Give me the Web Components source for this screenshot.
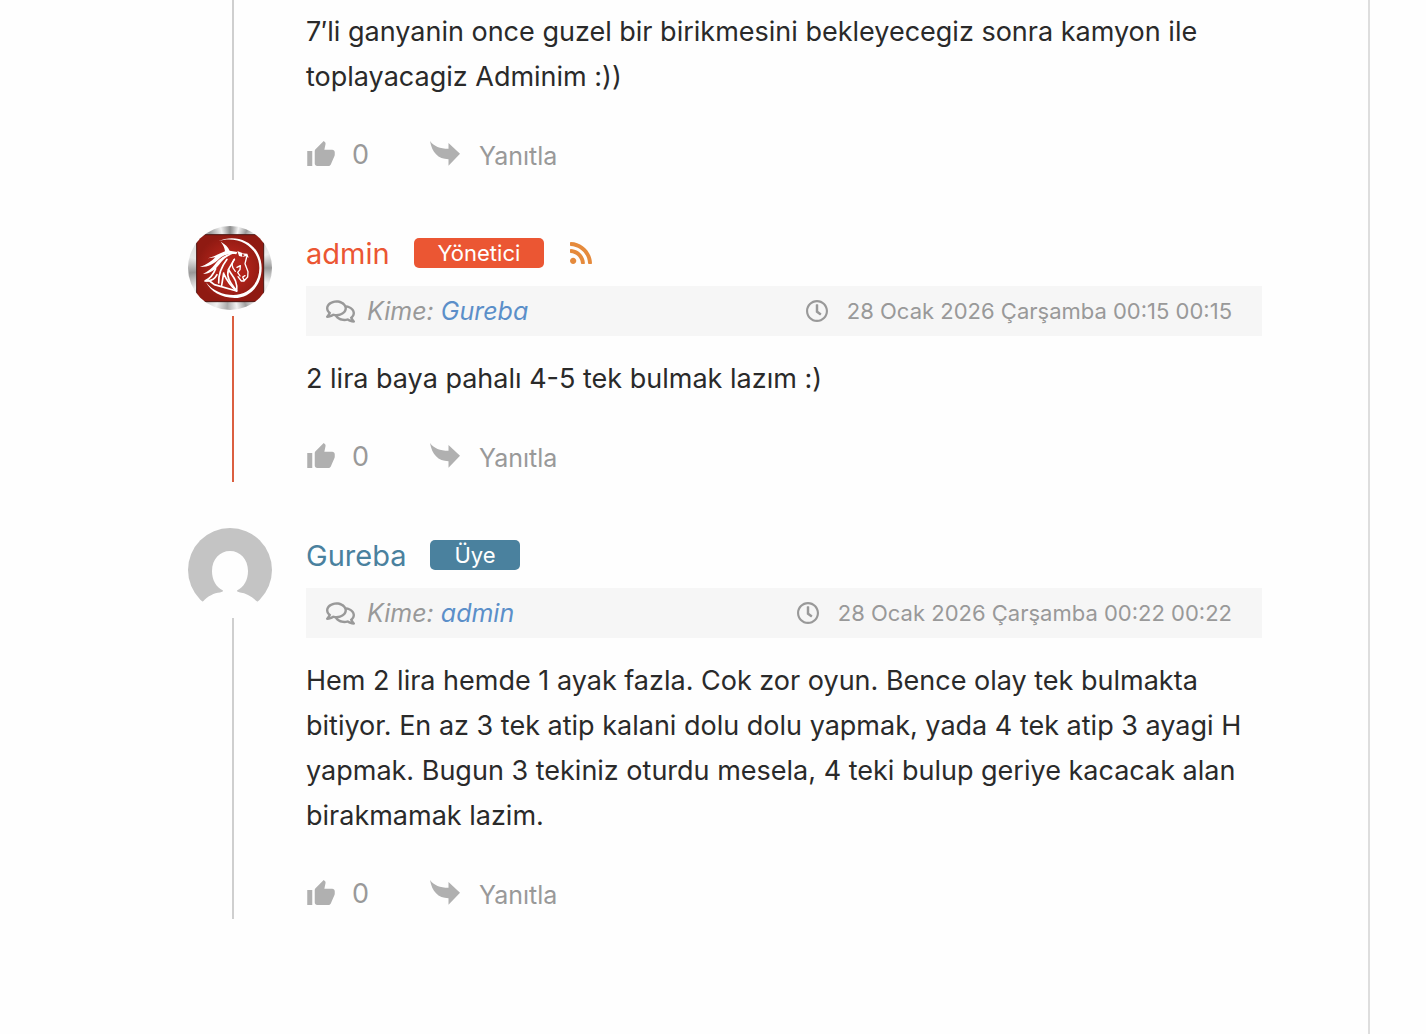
<!DOCTYPE html>
<html lang="tr">
<head>
<meta charset="utf-8">
<meta name="viewport" content="width=device-width, initial-scale=1">
<title>Yorumlar</title>
<style>
    body {
        margin: 0;
        background: #fefefe;
        color: #2a2a2a;
        font-family: Inter, "Liberation Sans", sans-serif;
    }
</style>
</head>
<body>
<comment-thread>
    <comment-item>
        7′li ganyanin once guzel bir birikmesini bekleyecegiz sonra kamyon ile toplayacagiz Adminim :))
    </comment-item>
    <comment-item author="admin" role-name="Yönetici" kind="admin" to="Gureba" date="28 Ocak 2026 Çarşamba 00:15 00:15">
        2 lira baya pahalı 4-5 tek bulmak lazım :)
    </comment-item>
    <comment-item author="Gureba" role-name="Üye" kind="member" to="admin" date="28 Ocak 2026 Çarşamba 00:22 00:22">
        Hem 2 lira hemde 1 ayak fazla. Cok zor oyun. Bence olay tek bulmakta bitiyor. En az 3 tek atip kalani dolu dolu yapmak, yada 4 tek atip 3 ayagi H yapmak. Bugun 3 tekiniz oturdu mesela, 4 teki bulup geriye kacacak alan birakmamak lazim.
    </comment-item>
</comment-thread>

<script>
const ICONS = {
    comments: ['0 32 576 448', 'M532 386.2c27.5-27.1 44-61.1 44-98.2 0-80-76.5-146.1-176.2-157.9C368.3 72.5 294.3 32 208 32 93.1 32 0 103.6 0 192c0 37 16.5 71 44 98.2-15.3 30.7-37.3 54.5-37.7 54.9-6.3 6.7-8.1 16.5-4.4 25 3.6 8.5 12 14 21.2 14 53.5 0 96.7-20.2 125.2-38.8 9.2 2.1 18.7 3.7 28.4 4.9C208.1 407.6 281.8 448 368 448c20.8 0 40.8-2.4 59.8-6.8C456.3 459.7 499.4 480 553 480c9.2 0 17.5-5.5 21.2-14 3.6-8.5 1.9-18.3-4.4-25-.4-.3-22.5-24.1-37.8-54.8zm-392.8-92.3L122.1 305c-14.1 9.1-28.5 16.3-43.1 21.4 2.7-4.7 5.4-9.7 8-14.8l15.5-31.1L77.7 256C64.2 242.6 48 220.7 48 192c0-60.7 73.3-112 160-112s160 51.3 160 112-73.3 112-160 112c-16.5 0-33-1.9-49-5.6l-19.8-4.5zM498.3 352l-24.7 24.4 15.5 31.1c2.6 5.1 5.3 10.1 8 14.8-14.6-5.1-29-12.3-43.1-21.4l-17.1-11.1-19.9 4.6c-16 3.7-32.5 5.6-49 5.6-54 0-102.2-20.1-131.3-49.7C338 339.5 416 272.9 416 192c0-3.4-.4-6.7-.7-10C479.7 196.5 528 238.8 528 288c0 28.7-16.2 50.6-29.7 64z'],
    clock: ['8 8 496 496', 'M256 8C119 8 8 119 8 256s111 248 248 248 248-111 248-248S393 8 256 8zm0 448c-110.5 0-200-89.5-200-200S145.5 56 256 56s200 89.5 200 200-89.5 200-200 200zm61.8-104.4l-84.9-61.7c-3.1-2.3-4.9-5.9-4.9-9.7V116c0-6.6 5.4-12 12-12h32c6.6 0 12 5.4 12 12v141.7l66.8 48.6c5.4 3.9 6.5 11.4 2.6 16.8L334.6 349c-3.9 5.3-11.4 6.5-16.8 2.6z'],
    rss: ['0 32 448 448', 'M128.081 415.959c0 35.369-28.672 64.041-64.041 64.041S0 451.328 0 415.959s28.672-64.041 64.041-64.041 64.04 28.673 64.04 64.041zm175.66 47.25c-8.354-154.6-132.185-278.587-286.95-286.95C7.656 175.765 0 183.105 0 192.253v48.069c0 8.415 6.49 15.472 14.887 16.018 111.832 7.284 201.473 96.702 208.772 208.772.547 8.397 7.604 14.887 16.018 14.887h48.069c9.149.001 16.489-7.655 15.995-16.79zm144.249.288C439.596 229.677 251.465 40.445 16.503 32.01 7.473 31.686 0 38.981 0 48.016v48.068c0 8.625 6.835 15.645 15.453 15.999 191.179 7.839 344.627 161.316 352.465 352.465.353 8.618 7.373 15.453 15.999 15.453h48.068c9.034-.001 16.329-7.474 16.005-16.504z'],
    like: ['1 1 22 20', 'M1 21h4V9H1v12zm22-11c0-1.1-.9-2-2-2h-6.31l.95-4.57.03-.32c0-.41-.17-.79-.44-1.06L14.17 1 7.59 7.59C7.22 7.95 7 8.45 7 9v10c0 1.1.9 2 2 2h9c.83 0 1.54-.5 1.84-1.22l3.02-7.05c.09-.23.14-.47.14-.73v-2z'],
    reply: ['0 0 30 25', 'M0 0C4 5.500 10 7.700 18.500 7.800V2L30 12.700 18.500 24.700V18.200C8 18 2 11.500 0 0z']
};

class CommentIcon extends HTMLElement {
    connectedCallback() {
        const [viewBox, path] = ICONS[this.getAttribute('name')];
        this.attachShadow({ mode: 'open' });
        this.shadowRoot.innerHTML = `
            <style>
                :host { display: block; flex: none; }
                svg { display: block; width: 100%; height: 100%; fill: currentColor; }
            </style>
            <svg viewBox="${viewBox}" aria-hidden="true"><path d="${path}"/></svg>
        `;
    }
}

class UserAvatar extends HTMLElement {
    connectedCallback() {
        this.attachShadow({ mode: 'open' });
        this.shadowRoot.innerHTML = `
            <style>
                :host { display: block; width: 84px; height: 84px; flex: none; }
                .face { width: 100%; height: 100%; border-radius: 50%; overflow: hidden; }
                .metal {
                    background: conic-gradient(#8d8d8d, #aaa 4deg, #f4f4f4 12deg, #999 24deg, #eee 36deg, #ddd 55deg, #eee 70deg, #999 90deg, #f5f5f5 112deg, #ddd 135deg, #eee 145deg, #a0a0a0 157deg, #f2f2f2 170deg, #aaa 184deg, #f0f0f0 200deg, #ccc 215deg, #eee 240deg, #999 263deg, #e8e8e8 285deg, #ddd 310deg, #999 330deg, #f0f0f0 347deg, #8d8d8d);
                }
                svg { display: block; width: 100%; height: 100%; }
            </style>
            ${this.getAttribute('kind') === 'admin' ? this.horse() : this.silhouette()}
        `;
    }

    silhouette() {
        return `
            <div class="face">
                <svg viewBox="0 0 84 84" aria-hidden="true">
                    <path fill="#c4c4c4" d="M0 0h84v84H68L69 73.500C63 68 58 65 52 64.500 50 64 49 63.500 49 62.500 56 59 60 52 60 43 60 31 52 23 42 23S24 31 24 43C24 52 28 59 35 62.500 35 63.500 34 64 32 64.500 26 65 20 68 15 73.500L14 84H0z"/>
                    <path fill="#fefefe" d="M0 73.500h84V84H0z"/>
                </svg>
            </div>`;
    }

    horse() {
        return `
            <div class="face metal">
                <svg viewBox="12 12 252 252" aria-hidden="true">
                    <defs>
                        <radialGradient id="red"><stop offset="0.4" stop-color="#b3241b"/><stop offset="1" stop-color="#8f1a12"/></radialGradient>
                    </defs>
                    <path fill="url(#red)" stroke="#4a1612" stroke-width="3" d="M56 38h164l19 19v163l-19 19H56l-18-19V57z"/>
                    <path fill="#fff" d="M102 58C166 30 233 71 233 138 233 193 195 228 152 228 111 228 80 208 66 181 87 207 116 219 148 219 191 219 226 186 226 138 226 78 165 38 102 58z"/>
                    <g fill="#fff">
                        <path d="M110 59C123 66 133 75 137 86L160 90 157 97C136 93 118 99 105 111 90 125 72 136 48 135 68 128 84 117 94 106L72 109C92 102 108 95 123 88 122 77 117 68 110 59z"/>
                        <path d="M156 93C132 98 118 112 107 126 94 143 78 156 57 156 72 149 83 140 93 127 105 111 128 92 156 93z"/>
                        <path d="M160 87 175 93 174 104 165 102z"/>
                        <path d="M171 94 190 95 194 107 185 103 173 105 182 99z"/>
                    </g>
                    <g fill="none" stroke="#fff" stroke-width="5" stroke-linejoin="round" stroke-linecap="round">
                        <path d="M95 140C88 158 79 170 63 177L77 177 91 188 158 207C147 191 125 171 133 143L151 112"/>
                        <path d="M129 112C114 132 103 155 104 183M66 176C85 178 93 170 99 158M119 153 113 190M119 155C128 175 139 191 158 207M134 143C142 160 162 173 158 207"/>
                        <path d="M151 112C140 124 145 138 154 148M188 105 183 125 192 149 191 165 181 176 176 165 183 161" stroke-width="4"/>
                        <path d="M159 136 169 131 168 143 161 151 168 162M162 164 172 177 180 177" stroke-width="4"/>
                    </g>
                </svg>
            </div>`;
    }
}

class CommentThread extends HTMLElement {
    connectedCallback() {
        this.attachShadow({ mode: 'open' });
        this.shadowRoot.innerHTML = `
            <style>
                :host {
                    display: flex;
                    flex-direction: column;
                    gap: 46px;
                    box-sizing: border-box;
                    min-height: 100vh;
                    margin-right: 56px;
                    padding: 9px 106px 46px 188px;
                    border-right: 2px solid #dedede;
                }
            </style>
            <slot></slot>
        `;
    }
}

class CommentMeta extends HTMLElement {
    connectedCallback() {
        this.attachShadow({ mode: 'open' });
        this.shadowRoot.innerHTML = `
            <style>
                :host {
                    display: flex;
                    align-items: center;
                    justify-content: space-between;
                    height: 50px;
                    padding: 0 30px 0 20px;
                    background: #f6f6f6;
                    color: #999;
                }
                div { display: flex; align-items: center; }
                .to { gap: 12px; font-size: 25px; font-style: italic; line-height: 50px; }
                .to comment-icon { width: 29px; height: 23px; }
                .date { gap: 19px; font-size: 22px; }
                .date comment-icon { width: 22px; height: 22px; }
                a { color: #5b8fc9; text-decoration: none; }
            </style>
            <div class="to">
                <comment-icon name="comments"></comment-icon>
                <span>Kime: <a href="#">${this.getAttribute('to')}</a></span>
            </div>
            <div class="date">
                <comment-icon name="clock"></comment-icon>
                <time>${this.getAttribute('date')}</time>
            </div>
        `;
    }
}

class CommentActions extends HTMLElement {
    connectedCallback() {
        this.attachShadow({ mode: 'open' });
        this.shadowRoot.innerHTML = `
            <style>
                :host {
                    display: flex;
                    align-items: center;
                    height: 36px;
                    padding: 37px 0 8px;
                    color: #999;
                }
                button {
                    display: flex;
                    align-items: center;
                    padding: 0;
                    border: 0;
                    background: none;
                    color: inherit;
                    font: inherit;
                    cursor: pointer;
                }
                comment-icon { margin-bottom: 2px; color: #b0b0b0; }
                .vote { display: flex; align-items: center; gap: 17px; margin-right: 61px; font-size: 27px; }
                .vote comment-icon { width: 28px; height: 25px; margin-left: 1px; }
                .reply { gap: 19px; font-size: 25px; }
                .reply comment-icon { width: 30px; height: 25px; }
                .reply span { padding-top: 4px; }
            </style>
            <div class="vote">
                <button aria-label="Beğen"><comment-icon name="like"></comment-icon></button>
                <span>0</span>
            </div>
            <button class="reply">
                <comment-icon name="reply"></comment-icon>
                <span>Yanıtla</span>
            </button>
        `;
    }
}

class CommentItem extends HTMLElement {
    connectedCallback() {
        const author = this.getAttribute('author');
        const kind = this.getAttribute('kind');
        this.attachShadow({ mode: 'open' });
        this.shadowRoot.innerHTML = `
            <style>
                :host {
                    --accent: #4a819e;
                    --line: #cfcfcf;
                    display: grid;
                    grid-template-columns: 84px minmax(0, 1fr);
                    column-gap: 34px;
                }
                :host([kind="admin"]) { --accent: #eb5633; --line: #db5f40; }
                .rail { display: flex; flex-direction: column; gap: 6px; }
                .line { flex: 1; width: 2px; margin-left: 44px; background: var(--line); }
                /* a comment that began above the fold keeps its line up to the edge */
                :host(:not([author])) .line { margin-top: -9px; }
                header {
                    display: flex;
                    align-items: center;
                    height: 30px;
                    gap: 24px;
                    padding: 12px 0 18px;
                }
                .name { color: var(--accent); font-size: 29px; text-decoration: none; }
                .badge {
                    padding: 0 24px;
                    border-radius: 5px;
                    background: var(--accent);
                    color: #fff;
                    font-size: 22px;
                    line-height: 30px;
                }
                header comment-icon { width: 22px; height: 22px; margin-left: 2px; color: #e58a3c; }
                p { margin: 0; font-size: 27px; line-height: 45px; }
                comment-meta { margin-bottom: 20px; }
            </style>
            <div class="rail">
                ${author ? `<user-avatar kind="${kind}"></user-avatar>` : ''}
                <div class="line"></div>
            </div>
            <article>
                ${author ? `
                <header>
                    <a class="name" href="#">${author}</a>
                    <span class="badge">${this.getAttribute('role-name')}</span>
                    ${kind === 'admin' ? '<comment-icon name="rss"></comment-icon>' : ''}
                </header>
                <comment-meta to="${this.getAttribute('to')}" date="${this.getAttribute('date')}"></comment-meta>` : ''}
                <p><slot></slot></p>
                <comment-actions></comment-actions>
            </article>
        `;
    }
}

customElements.define('comment-icon', CommentIcon);
customElements.define('user-avatar', UserAvatar);
customElements.define('comment-meta', CommentMeta);
customElements.define('comment-actions', CommentActions);
customElements.define('comment-item', CommentItem);
customElements.define('comment-thread', CommentThread);
</script>
</body>
</html>
